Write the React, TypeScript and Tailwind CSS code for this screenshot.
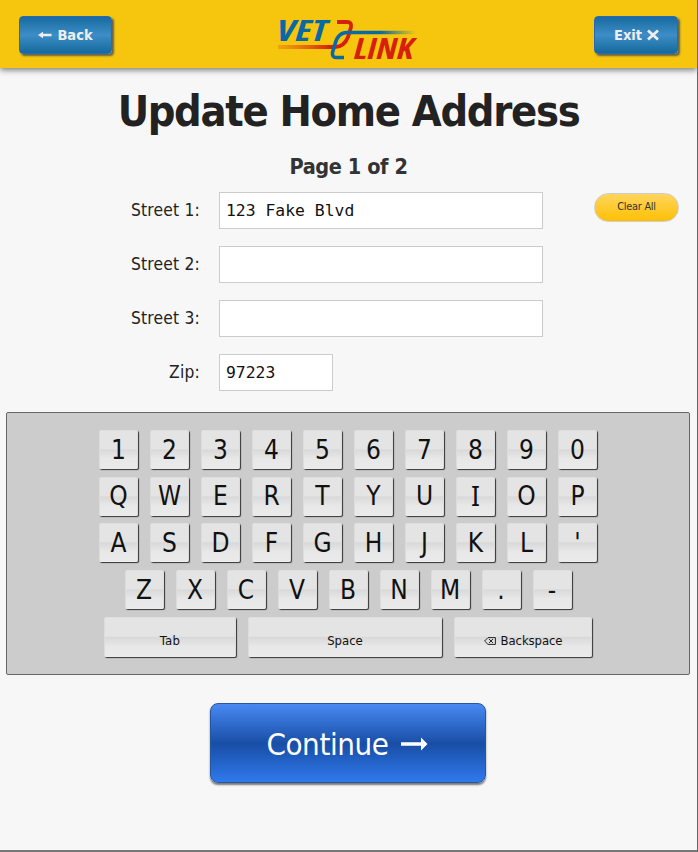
import React from "react";

const sans = "font-['DejaVu_Sans_Condensed','DejaVu_Sans',sans-serif] [font-stretch:condensed]";
const keyFace =
  "box-border rounded-[2px] border border-t-[#e0e0e0] border-l-[#dcdcdc] border-r-[#dcdcdc] border-b-[#ececec] bg-[linear-gradient(to_bottom,#e4e4e4_0%,#e4e4e4_48%,#d9d9d9_51%,#e8e8e8_75%,#eaeaea_100%)] shadow-[1px_1px_1px_#333] text-[#111] flex items-center justify-center";

const navButton =
  "h-[38px] rounded-[4px] border border-[#2c68b5] bg-[linear-gradient(to_bottom,#176b9f_0%,#3d8dc7_50%,#146a9b_100%)] shadow-[2px_2px_2px_#64634f] flex items-center justify-center text-[#eee] font-bold text-[14.5px] leading-none";

function Logo() {
  return (
    <svg className="block" width="160" height="68" viewBox="-10 -12 160 68" fill="none">
      <defs>
        <linearGradient id="redFade" gradientUnits="userSpaceOnUse" x1="0" y1="0" x2="52" y2="0">
          <stop offset="0" stopColor="#e9790c" stopOpacity="0.45" />
          <stop offset="1" stopColor="#d6200c" />
        </linearGradient>
        <linearGradient id="blueFade" gradientUnits="userSpaceOnUse" x1="78" y1="0" x2="138" y2="0">
          <stop offset="0" stopColor="#0968a6" />
          <stop offset="0.4" stopColor="#0968a6" />
          <stop offset="1" stopColor="#0968a6" stopOpacity="0" />
        </linearGradient>
      </defs>
      <text x="-1.5" y="29" textLength="51" lengthAdjust="spacingAndGlyphs" fill="#0968a6" className="font-['Open_Sans',sans-serif] text-[29px] font-bold italic">VET</text>
      <text x="76" y="47" textLength="60" lengthAdjust="spacingAndGlyphs" fill="#d6200c" className="font-['Open_Sans',sans-serif] text-[29px] font-bold italic">LINK</text>
      <path d="M59 10H69Q74 10 73 15L70 25Q66 35 57 35H0" stroke="url(#redFade)" strokeWidth="3.8" />
      <path d="M66 45.5H58Q54 45.5 54.5 40.5L57 32Q60 20.5 69 20.5H137" stroke="url(#blueFade)" strokeWidth="3.6" />
    </svg>
  );
}

function Key({ char }: { char: string }) {
  return (
    <div className={keyFace + " h-[39px] w-[39px] text-[26px] leading-none"}>
      <span className={char === "I" ? "font-['Noto_Sans',sans-serif] text-[26.5px]" : ""}>{char}</span>
    </div>
  );
}

function KeyRow({ chars }: { chars: string }) {
  return (
    <div className="flex justify-center gap-3">
      {chars.split("").map((c) => (
        <Key key={c} char={c} />
      ))}
    </div>
  );
}

function Field({ label, value, width }: { label: string; value: string; width: string }) {
  return (
    <div className="flex h-[37px] items-center">
      <label className="w-[200px] text-right text-[17.3px] tracking-[0.2px] text-[#222]">{label}</label>
      <input
        defaultValue={value}
        className={"ml-[19px] h-[37px] border border-[#ccc] bg-white px-[6px] font-['DejaVu_Sans_Mono',monospace] text-[16.4px] text-[#111] outline-none " + width}
      />
    </div>
  );
}

export default function App() {
  return (
    <div className={"flex h-[852px] w-[698px] flex-col overflow-hidden border-r border-b-2 border-r-[#666] border-b-[#777] bg-[#f7f7f7] " + sans}>
      <header className="flex h-[68px] shrink-0 items-start justify-between bg-[#f5c60d] pl-[19px] pr-[19px] shadow-[0_2px_6px_#777]">
        <button className={navButton + " mt-4 w-[93px] gap-[5px]"}>
          <svg width="14" height="8" viewBox="0 0 14 8" fill="currentColor">
            <path d="M0 4L5 0.8V2.7H13.5V5.3H5V7.2Z" />
          </svg>
          <span>Back</span>
        </button>
        <div className="mr-[10px]">
          <Logo />
        </div>
        <button className={navButton + " mt-4 w-[84px] gap-[5px] pl-px"}>
          <span>Exit</span>
          <svg width="12" height="12" viewBox="0 0 12 12" stroke="currentColor" strokeWidth="2.8">
            <path d="M1 1.5L11 10.5M11 1.5L1 10.5" />
          </svg>
        </button>
      </header>

      <h1 className="mt-[15px] h-14 text-center text-[43px] leading-[56px] font-bold tracking-[-1.32px] whitespace-nowrap text-[#222]">Update Home Address</h1>
      <h2 className="mt-[14px] h-7 text-center text-[21.5px] leading-7 font-bold tracking-[-0.4px] text-[#333]">Page 1 of 2</h2>

      <form className="mt-[11px] flex items-start">
        <div className="flex flex-col gap-[17px]">
          <Field label="Street 1:" value="123 Fake Blvd" width="w-[324px]" />
          <Field label="Street 2:" value="" width="w-[324px]" />
          <Field label="Street 3:" value="" width="w-[324px]" />
          <Field label="Zip:" value="97223" width="w-[114px]" />
        </div>
        <button type="button" className="mt-px ml-[51px] h-[29px] w-[85px] rounded-full border border-[#ccc] bg-[linear-gradient(to_bottom,#ffd65e_0%,#febf04_100%)] text-[10.8px] tracking-[-0.2px] text-[#333]">Clear All</button>
      </form>

      <section className="mt-[21px] ml-[6px] flex h-[263px] w-[684px] shrink-0 flex-col gap-[7.7px] rounded-[2px] border border-[#666] bg-[#ccc] pt-[17px]">
        <KeyRow chars="1234567890" />
        <KeyRow chars="QWERTYUIOP" />
        <KeyRow chars="ASDFGHJKL'" />
        <KeyRow chars="ZXCVBNM.-" />
        <div className="flex justify-center gap-3 text-[13px]">
          <div className={keyFace + " h-10 w-[132px] pt-[8px] tracking-[0.3px]"}>Tab</div>
          <div className={keyFace + " h-10 w-[194px] pt-[8px]"}>Space</div>
          <div className={keyFace + " h-10 w-[138px] gap-[5px] pt-[8px]"}>
            <svg width="12" height="8" viewBox="0 0 12 8" fill="none" stroke="currentColor" strokeWidth="0.9">
              <path d="M0.6 4L4 0.6H11.4V7.4H4ZM5 2L9 6M9 2L5 6" />
            </svg>
            <span className="tracking-[-0.1px]">Backspace</span>
          </div>
        </div>
      </section>

      <button className="mt-[28px] ml-[210px] flex h-[80px] w-[276px] shrink-0 items-center justify-center gap-[12px] rounded-[8px] border border-[#2857a0] bg-[linear-gradient(to_bottom,#4889f2_0%,#184ea6_51%,#3079ed_100%)] pr-[2px] text-[31px] text-white shadow-[0_2px_2px_#777]">
        <span className="mt-[3px] tracking-[-0.4px]">Continue</span>
        <svg className="mt-[2px]" width="27" height="14" viewBox="0 0 27 14" fill="currentColor">
          <path d="M0 5.2H20V0.5L26.5 7L20 13.5V8.8H0Z" />
        </svg>
      </button>
    </div>
  );
}
